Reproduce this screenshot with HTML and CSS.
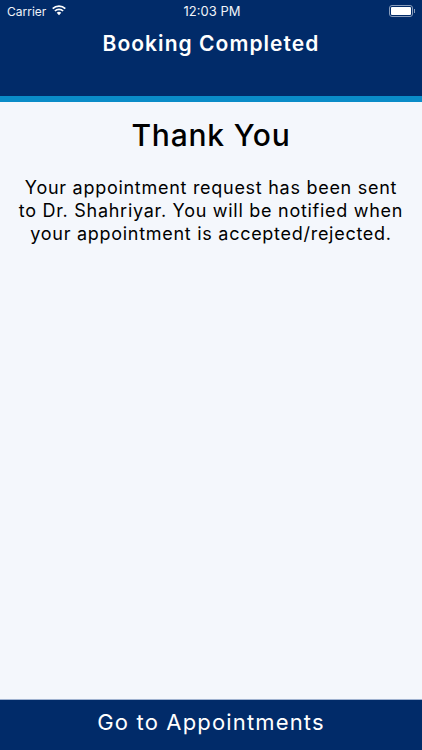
FILE: index.html
```html
<!DOCTYPE html>
<html lang="en">
<head>
<meta charset="utf-8">
<title>Booking Completed</title>
<link rel="stylesheet" href="styles.css">
</head>
<body>
<div class="screen">
  <header class="header">
    <div class="status">
      <div class="status-left">
        <span class="carrier">Carrier</span>
        <svg class="wifi" viewBox="0 0 16 12" width="16" height="12"><path d="M8 11.2 5.7 8.8a3.3 3.3 0 0 1 4.6 0Z" fill="#fff"/><path d="M3.9 7a5.9 5.9 0 0 1 8.2 0M1.7 4.7a9 9 0 0 1 12.6 0" fill="none" stroke="#fff" stroke-width="1.7"/></svg>
      </div>
      <span class="status-time">12:03 PM</span>
      <div class="status-right">
        <div class="battery"><div class="battery-fill"></div></div>
        <div class="battery-cap"></div>
      </div>
    </div>
    <h1 class="title">Booking Completed</h1>
  </header>
  <main class="content">
    <h2 class="thanks">Thank You</h2>
    <p class="message">Your appointment request has been sent<br>to Dr. Shahriyar. You will be notified when<br>your appointment is accepted/rejected.</p>
  </main>
  <button class="cta" type="button">Go to Appointments</button>
</div>
</body>
</html>
```

FILE: styles.css
```css
* { box-sizing: border-box; margin: 0; padding: 0; }
html, body { height: 100%; }
body { font-family: Inter, "Liberation Sans", sans-serif; background: #f4f7fc; overflow: hidden; }
.screen { height: 750px; display: flex; flex-direction: column; }
.header { height: 102px; flex: none; background: #012b69; border-bottom: 6px solid #0a8cc8; color: #fff; }
.status { height: 22px; padding: 0 5px 0 7px; display: grid; grid-template-columns: 1fr auto 1fr; align-items: center; font-size: 13px; color: #f0f3f8; }
.status-left { display: flex; align-items: center; gap: 5px; }
.carrier { font-size: 12px; }
.wifi { display: block; margin-top: -2px; }
.status-time { font-size: 13px; }
.status-right { display: flex; align-items: center; justify-content: flex-end; padding-right: 2px; }
.battery { width: 24px; height: 11.5px; border: 1px solid #8a9dbb; border-radius: 3px; padding: 1px; }
.battery-fill { height: 100%; background: #fff; border-radius: 1px; }
.battery-cap { width: 1.5px; height: 4px; background: #8a9dbb; margin-left: 1px; }
.title { text-align: center; font-size: 21px; font-weight: 600; line-height: 44px; letter-spacing: 1.05px; }
.content { flex: 1; text-align: center; color: #000; }
.thanks { font-size: 30px; font-weight: 500; line-height: 34px; margin-top: 16px; letter-spacing: 0.8px; }
.message { font-size: 18px; font-weight: 400; line-height: 23px; margin-top: 24px; letter-spacing: 0.72px; }
.cta { height: 51px; flex: none; width: 100%; border: 0; border-top: 1px solid #9fb2d0; background: #012b69; color: #fff; font: 400 22px/1 Inter, "Liberation Sans", sans-serif; letter-spacing: 1.15px; padding-bottom: 6px; }
```
